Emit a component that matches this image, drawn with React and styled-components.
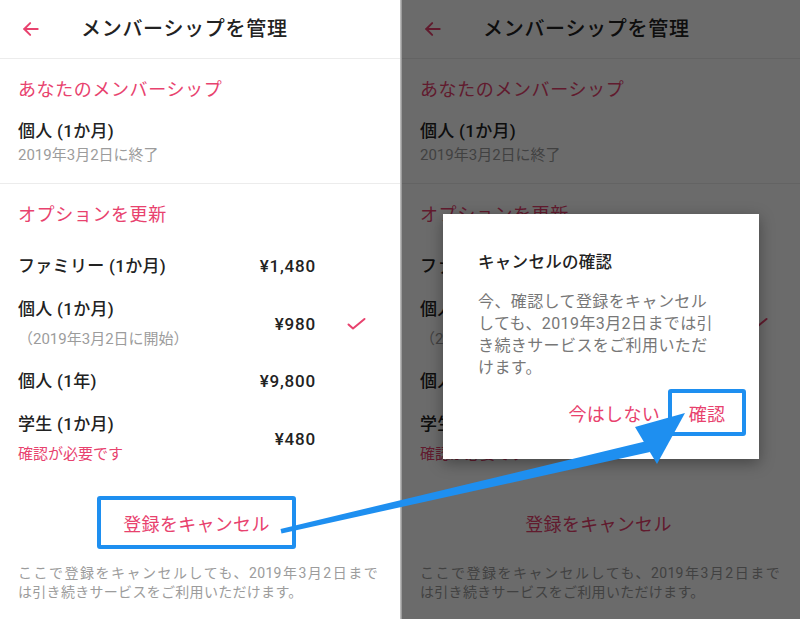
import React from "react";
import styled, { createGlobalStyle } from "styled-components";

const PINK = "#e8426e";
const BLUE = "#1e8ff0";
const FONT = `"Roboto", "Noto Sans CJK JP", sans-serif`;

const GlobalStyle = createGlobalStyle`
  html, body { margin: 0; padding: 0; background: #ffffff; }
  body { font-family: ${FONT}; -webkit-font-smoothing: antialiased; }
  * { box-sizing: border-box; }
`;

const Page = styled.div`
  position: relative;
  width: 800px;
  height: 619px;
  display: flex;
  overflow: hidden;
  font-family: ${FONT};
`;

const Panel = styled.div`
  position: relative;
  width: ${(p) => p.$w}px;
  height: 619px;
  background: #ffffff;
  overflow: hidden;
  flex: none;
`;

const Divider = styled.div`
  width: 2px;
  flex: none;
  background: linear-gradient(to right, #c9c9c9, #8c8c8c);
`;

const Screen = styled.div`
  width: 400px;
  display: flex;
  flex-direction: column;
`;

const Header = styled.header`
  height: 59px;
  display: flex;
  align-items: center;
  gap: 40px;
  padding-left: 21px;
  border-bottom: 1px solid #ececec;
  margin-bottom: 1px;
`;

const Title = styled.h1`
  margin: 0;
  font-size: 20px;
  font-weight: 500;
  letter-spacing: 0.7px;
  color: #222;
  line-height: 26px;
`;

const Section = styled.section`
  padding: ${(p) => p.$pad};
  border-bottom: ${(p) => (p.$border ? "1px solid #ececec" : "none")};
  display: flex;
  flex-direction: column;
`;

const Heading = styled.h2`
  margin: 0;
  font-size: 18px;
  font-weight: 400;
  letter-spacing: 0.6px;
  line-height: 26px;
  color: ${PINK};
`;

const Label = styled.div`
  font-size: 17px;
  font-weight: 500;
  letter-spacing: 0.3px;
  line-height: 22px;
  color: #222;
  margin-top: ${(p) => p.$mt || 0}px;
`;

const Sub = styled.div`
  font-size: 15px;
  line-height: ${(p) => p.$lh || 18}px;
  color: ${(p) => (p.$pink ? PINK : "#9c9c9c")};
  margin-top: ${(p) => p.$mt || 0}px;
  letter-spacing: 0;
`;

const Rows = styled.div`
  display: flex;
  flex-direction: column;
  gap: 21px;
  margin-top: 27px;
`;

const Row = styled.div`
  display: grid;
  grid-template-columns: 1fr auto 84px;
  align-items: center;
`;

const Price = styled.div`
  font-size: 17px;
  font-weight: 500;
  letter-spacing: 0.8px;
  color: #222;
  text-align: right;
`;

const CheckCell = styled.div`
  display: flex;
  align-items: center;
  padding-left: 31px;
  height: 22px;
`;

const CancelButton = styled.div`
  margin: 32px 0 0 97px;
  width: 199px;
  height: 53px;
  display: flex;
  align-items: center;
  justify-content: center;
  border: 4px solid ${(p) => (p.$hl ? BLUE : "transparent")};
  border-radius: 3px;
  font-size: 18px;
  letter-spacing: 0.3px;
  color: ${PINK};
`;

const Footer = styled.p`
  margin: 15px 0 0;
  padding: 0 22px 0 18px;
  font-size: 14px;
  line-height: 19px;
  letter-spacing: 0.3px;
  color: #9c9c9c;
`;

const JustifiedLine = styled.span`
  display: block;
  text-align: justify;
  text-align-last: justify;
`;

const Dim = styled.div`
  position: absolute;
  inset: 0;
  background: rgba(0, 0, 0, 0.58);
`;

const Dialog = styled.div`
  position: absolute;
  top: 214px;
  left: 41px;
  width: 316px;
  height: 245px;
  background: #fff;
  box-shadow: 0 4px 14px rgba(0, 0, 0, 0.35);
  padding: 37px 35px 0;
  display: flex;
  flex-direction: column;
`;

const DialogTitle = styled.div`
  font-size: 16.5px;
  font-weight: 500;
  line-height: 24px;
  color: #222;
  letter-spacing: 0.3px;
`;

const DialogBody = styled.div`
  margin-top: 16px;
  font-size: 16px;
  line-height: 22px;
  letter-spacing: 0.4px;
  color: #777;
`;

const Actions = styled.div`
  margin-top: 10px;
  margin-right: -22px;
  display: flex;
  justify-content: flex-end;
  align-items: center;
  gap: 8px;
`;

const ActionButton = styled.div`
  height: 47px;
  display: flex;
  align-items: center;
  justify-content: center;
  width: ${(p) => (p.$w ? `${p.$w}px` : "auto")};
  border: ${(p) => (p.$hl ? `4px solid ${BLUE}` : "none")};
  border-radius: 3px;
  font-size: 18px;
  letter-spacing: 0.3px;
  color: ${PINK};
`;

const ArrowLayer = styled.svg`
  position: absolute;
  left: 0;
  top: 0;
  pointer-events: none;
`;

const BackArrow = () => (
  <svg width="20" height="20" viewBox="0 0 24 24" fill="none" stroke={PINK} strokeWidth="2.4" strokeLinecap="round" strokeLinejoin="round">
    <path d="M20 12H4" />
    <path d="M11 19l-7-7 7-7" />
  </svg>
);

const Check = () => (
  <svg width="19" height="14" viewBox="0 0 19 14" fill="none" stroke={PINK} strokeWidth="2" strokeLinecap="round" strokeLinejoin="round">
    <path d="M1.5 7.5L6 11.5L17.5 2" />
  </svg>
);

const plans = [
  { label: "ファミリー (1か月)", price: "¥1,480" },
  { label: "個人 (1か月)", price: "¥980", sub: "（2019年3月2日に開始）", check: true },
  { label: "個人 (1年)", price: "¥9,800" },
  { label: "学生 (1か月)", price: "¥480", sub: "確認が必要です", pink: true },
];

function MembershipScreen({ highlight }) {
  return (
    <Screen>
      <Header>
        <BackArrow />
        <Title>メンバーシップを管理</Title>
      </Header>
      <Section $pad="17px 18px 19px" $border>
        <Heading>あなたのメンバーシップ</Heading>
        <Label $mt={17}>個人 (1か月)</Label>
        <Sub $mt={4}>2019年3月2日に終了</Sub>
      </Section>
      <Section $pad="18px 0 0 18px">
        <Heading>オプションを更新</Heading>
        <Rows>
          {plans.map((p) => (
            <Row key={p.label + p.price}>
              <div>
                <Label>{p.label}</Label>
                {p.sub && (
                  <Sub $mt={9} $lh={20} $pink={p.pink}>
                    {p.sub}
                  </Sub>
                )}
              </div>
              <Price>{p.price}</Price>
              <CheckCell>{p.check && <Check />}</CheckCell>
            </Row>
          ))}
        </Rows>
      </Section>
      <CancelButton $hl={highlight}>登録をキャンセル</CancelButton>
      <Footer>
        <JustifiedLine>ここで登録をキャンセルしても、2019年3月2日まで</JustifiedLine>
        は引き続きサービスをご利用いただけます。
      </Footer>
    </Screen>
  );
}

export default function App() {
  return (
    <>
      <GlobalStyle />
      <Page>
        <Panel $w={400}>
          <MembershipScreen highlight />
        </Panel>
        <Divider />
        <Panel $w={398}>
          <MembershipScreen />
          <Dim />
          <Dialog>
            <DialogTitle>キャンセルの確認</DialogTitle>
            <DialogBody>
              今、確認して登録をキャンセル
              <br />
              しても、2019年3月2日までは引
              <br />
              き続きサービスをご利用いただ
              <br />
              けます。
            </DialogBody>
            <Actions>
              <ActionButton>今はしない</ActionButton>
              <ActionButton $hl $w={78}>確認</ActionButton>
            </Actions>
          </Dialog>
        </Panel>
        <ArrowLayer width="800" height="619" viewBox="0 0 800 619">
          <polygon points="280.5,529 281.5,533.5 650,452 647,441" fill={BLUE} />
          <polygon points="685,413 635,427 657,464" fill={BLUE} />
        </ArrowLayer>
      </Page>
    </>
  );
}
